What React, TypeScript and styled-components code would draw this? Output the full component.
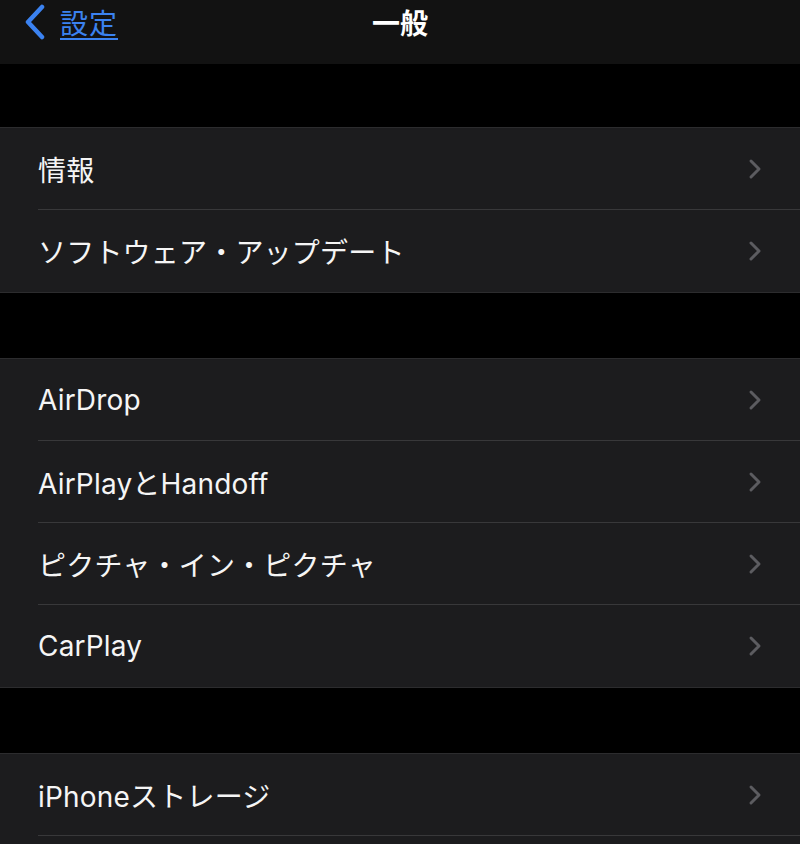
import styled, { createGlobalStyle } from "styled-components";

const GlobalStyle = createGlobalStyle`
  body {
    margin: 0;
    background: #000;
    font-family: "Inter", "Noto Sans CJK JP", sans-serif;
    -webkit-font-smoothing: antialiased;
  }
`;

const Screen = styled.div`
  width: 800px;
  height: 844px;
  overflow: hidden;
  background: #000;
`;

const NavBar = styled.header`
  height: 64px;
  background: #121212;
  display: grid;
  grid-template-columns: 1fr auto 1fr;
  align-items: start;
`;

const BackButton = styled.a`
  display: flex;
  align-items: center;
  gap: 14px;
  padding-left: 24px;
  height: 44px;
  color: #3b82f0;
  font-size: 28px;
  letter-spacing: 1px;
  text-decoration: underline;
  text-underline-offset: 4px;
  text-decoration-thickness: 2px;
  font-family: "Noto Sans CJK JP", sans-serif;
`;

const NavTitle = styled.h1`
  margin: 0;
  height: 44px;
  line-height: 44px;
  color: #fff;
  font-size: 28px;
  font-weight: 700;
  font-family: "Noto Sans CJK JP", sans-serif;
`;

const Spacer = styled.div<{ h: number }>`
  height: ${(p) => p.h}px;
  background: #000;
`;

const Group = styled.section<{ $open: boolean }>`
  background: #1c1c1e;
  border-top: 1px solid #2c2c2e;
  border-bottom: ${(p) => (p.$open ? "none" : "1px solid #2c2c2e")};
  padding-bottom: ${(p) => (p.$open ? "60px" : "0")};
`;

const Row = styled.div`
  height: 82px;
  padding-left: 38px;
  display: flex;
  align-items: stretch;
`;

const RowInner = styled.div<{ $divider: boolean }>`
  flex: 1;
  display: flex;
  align-items: center;
  justify-content: space-between;
  padding-right: 38px;
  border-bottom: ${(p) => (p.$divider ? "1px solid #38383a" : "none")};
`;

const Label = styled.span`
  color: #f5f5f5;
  font-size: 28px;
  font-family: "Inter", "Noto Sans CJK JP", sans-serif;
  letter-spacing: 0.2px;
`;

const Chevron = () => (
  <svg width="14" height="22" viewBox="0 0 14 22">
    <path
      d="M3 3 L11 11 L3 19"
      fill="none"
      stroke="#5c5c60"
      strokeWidth="3"
      strokeLinecap="round"
      strokeLinejoin="round"
    />
  </svg>
);

const BackChevron = () => (
  <svg width="22" height="36" viewBox="0 0 22 36">
    <path
      d="M18 3 L4 18 L18 33"
      fill="none"
      stroke="#3b82f0"
      strokeWidth="4.5"
      strokeLinecap="round"
      strokeLinejoin="round"
    />
  </svg>
);

// the last group runs on past the bottom of the screen
const groups = [
  { items: ["情報", "ソフトウェア・アップデート"], open: false },
  {
    items: ["AirDrop", "AirPlayとHandoff", "ピクチャ・イン・ピクチャ", "CarPlay"],
    open: false,
  },
  { items: ["iPhoneストレージ"], open: true },
];

export default function App() {
  return (
    <Screen>
      <GlobalStyle />
      <NavBar>
        <BackButton>
          <BackChevron />
          設定
        </BackButton>
        <NavTitle>一般</NavTitle>
        <div />
      </NavBar>
      {groups.map((g, gi) => (
        <div key={gi}>
          <Spacer h={gi === 0 ? 63 : 65} />
          <Group $open={g.open}>
            {g.items.map((item, i) => (
              <Row key={item}>
                <RowInner $divider={g.open || i < g.items.length - 1}>
                  <Label>{item}</Label>
                  <Chevron />
                </RowInner>
              </Row>
            ))}
          </Group>
        </div>
      ))}
    </Screen>
  );
}
